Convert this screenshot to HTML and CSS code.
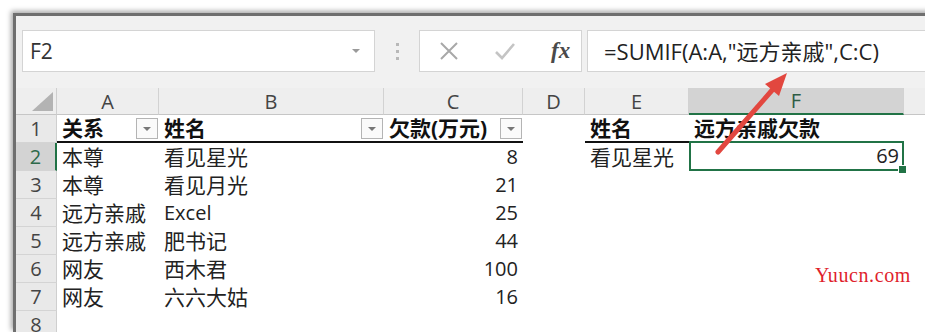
FILE: index.html
```html
<!DOCTYPE html>
<html lang="zh-CN">
<head>
    <meta charset="UTF-8">
    <title>SUMIF</title>
    <link rel="stylesheet" href="styles.css">
</head>
<body>
    <div class="window">
        <div class="toolbar">
            <div class="namebox">
                <span>F2</span>
                <span class="caret"></span>
            </div>
            <div class="dots"><i></i><i></i><i></i></div>
            <div class="fxbtns">
                <svg width="20" height="20" viewBox="0 0 20 20"><path d="M2 2 L18 18 M18 2 L2 18" stroke="#a8a8a8" stroke-width="2" fill="none"/></svg>
                <svg width="22" height="20" viewBox="0 0 22 20"><path d="M2 11 L8 17 L20 3" stroke="#c4c4c4" stroke-width="2.6" fill="none"/></svg>
                <span class="fx">fx</span>
            </div>
            <div class="formula">=SUMIF(A:A,"远方亲戚",C:C)</div>
        </div>

        <div class="sheet">
            <!-- 列标题 -->
            <div class="corner"><span class="tri"></span></div>
            <div class="colhead">A</div>
            <div class="colhead">B</div>
            <div class="colhead">C</div>
            <div class="colhead">D</div>
            <div class="colhead">E</div>
            <div class="colhead sel">F</div>
            <div class="colhead last"></div>

            <!-- 1 -->
            <div class="rowhead">1</div>
            <div class="cell th">关系<span class="filter"></span></div>
            <div class="cell th">姓名<span class="filter"></span></div>
            <div class="cell th">欠款(万元)<span class="filter"></span></div>
            <div class="cell"></div>
            <div class="cell th">姓名</div>
            <div class="cell th2">远方亲戚欠款</div>
            <div class="cell"></div>

            <!-- 2 -->
            <div class="rowhead sel">2</div>
            <div class="cell">本尊</div>
            <div class="cell">看见星光</div>
            <div class="cell num">8</div>
            <div class="cell"></div>
            <div class="cell">看见星光</div>
            <div class="cell num active">69<span class="handle"></span></div>
            <div class="cell"></div>

            <!-- 3 -->
            <div class="rowhead">3</div>
            <div class="cell">本尊</div>
            <div class="cell">看见月光</div>
            <div class="cell num">21</div>
            <div class="cell"></div><div class="cell"></div><div class="cell"></div><div class="cell"></div>

            <!-- 4 -->
            <div class="rowhead">4</div>
            <div class="cell">远方亲戚</div>
            <div class="cell latin">Excel</div>
            <div class="cell num">25</div>
            <div class="cell"></div><div class="cell"></div><div class="cell"></div><div class="cell"></div>

            <!-- 5 -->
            <div class="rowhead">5</div>
            <div class="cell">远方亲戚</div>
            <div class="cell">肥书记</div>
            <div class="cell num">44</div>
            <div class="cell"></div><div class="cell"></div><div class="cell"></div><div class="cell"></div>

            <!-- 6 -->
            <div class="rowhead">6</div>
            <div class="cell">网友</div>
            <div class="cell">西木君</div>
            <div class="cell num">100</div>
            <div class="cell"></div><div class="cell"></div><div class="cell"></div><div class="cell"></div>

            <!-- 7 -->
            <div class="rowhead">7</div>
            <div class="cell">网友</div>
            <div class="cell">六六大姑</div>
            <div class="cell num">16</div>
            <div class="cell"></div><div class="cell"></div><div class="cell"></div><div class="cell"></div>

            <!-- 8 -->
            <div class="rowhead">8</div>
            <div class="cell"></div><div class="cell"></div><div class="cell"></div>
            <div class="cell"></div><div class="cell"></div><div class="cell"></div><div class="cell"></div>
        </div>
    </div>

    <!-- 빨간 화살표 -->
    <svg class="arrow" width="925" height="332" viewBox="0 0 925 332">
        <path d="M718 152 L774 88" stroke="#e2473f" stroke-width="5" stroke-linecap="round" fill="none"/>
        <path d="M787 73 L765 84 L779 96 Z" fill="#e2473f"/>
    </svg>

    <div class="mark">Yuucn.com</div>
</body>
</html>
```

FILE: styles.css
```css
body {
    margin: 0;
    width: 925px;
    height: 332px;
    overflow: hidden;
    background-color: white;
    font-family: "Open Sans", "Noto Sans CJK SC", sans-serif;
    position: relative;
}

div.window {
    margin-left: 13px;
    margin-top: 13px;
    width: 920px;
    height: 316px;
    border-top: 3px solid #6f6f6f;
    border-left: 3px solid #6f6f6f;
    box-shadow: -2px -2px 5px rgba(0, 0, 0, 0.35);
    background-color: white;
    overflow: hidden;
}

/* 수식 입력줄 */
div.toolbar {
    height: 72px;
    background-color: #f1f1f1;
    display: flex;
    align-items: flex-start;
    padding-top: 14px;
    padding-left: 6px;
    box-sizing: border-box;
}

div.namebox {
    width: 353px;
    height: 42px;
    box-sizing: border-box;
    background-color: white;
    border: 1px solid #d4d4d4;
    display: flex;
    align-items: center;
    justify-content: space-between;
    padding: 0 14px 0 7px;
    font-size: 21px;
    color: #333;
}

div.namebox .caret {
    width: 0;
    height: 0;
    border-left: 4px solid transparent;
    border-right: 4px solid transparent;
    border-top: 4px solid #9a9a9a;
}

div.dots {
    width: 44px;
    height: 42px;
    display: flex;
    flex-direction: column;
    align-items: center;
    justify-content: center;
    gap: 4px;
}

div.dots i {
    width: 3px;
    height: 3px;
    background-color: #b8b8b8;
}

div.fxbtns {
    width: 163px;
    height: 42px;
    box-sizing: border-box;
    background-color: white;
    border: 1px solid #d4d4d4;
    display: flex;
    align-items: center;
    padding-left: 19px;
    gap: 35px;
}

div.fxbtns .fx {
    font-family: "Liberation Serif", serif;
    font-style: italic;
    font-weight: bold;
    font-size: 23px;
    color: #4a4a4a;
}

div.formula {
    margin-left: 5px;
    flex: 1;
    height: 42px;
    box-sizing: border-box;
    background-color: white;
    border: 1px solid #d4d4d4;
    border-right: none;
    padding-left: 16px;
    line-height: 40px;
    font-size: 22px;
    color: #222;
    white-space: nowrap;
}

/* 시트 */
div.sheet {
    display: grid;
    grid-template-columns: 41px 102px 225px 139px 62px 104px 215px 1fr;
    grid-template-rows: 27px repeat(8, 28px);
}

div.corner {
    background-color: #eeeeee;
    border-right: 1px solid #cfcfcf;
    border-bottom: 1px solid #c6c6c6;
    position: relative;
}

div.corner .tri {
    position: absolute;
    right: 3px;
    bottom: 3px;
    width: 0;
    height: 0;
    border-left: 21px solid transparent;
    border-bottom: 19px solid #b3b3b3;
}

div.colhead {
    background-color: #eeeeee;
    border-right: 1px solid #d2d2d2;
    border-bottom: 1px solid #c6c6c6;
    text-align: center;
    font-size: 20px;
    line-height: 27px;
    color: #444;
}

div.colhead.sel {
    background-color: #d3d3d3;
    border-bottom: 2px solid #217346;
    color: #2e5c45;
    line-height: 26px;
}

div.colhead.last {
    border-right: none;
}

div.rowhead {
    background-color: #e9e9e9;
    border-right: 1px solid #cfcfcf;
    border-bottom: 1px solid #d4d4d4;
    text-align: center;
    font-size: 20px;
    line-height: 28px;
    color: #444;
}

div.rowhead.sel {
    background-color: #d3d3d3;
    border-right: 2px solid #217346;
    color: #2e6a4a;
}

div.cell {
    font-size: 21px;
    line-height: 28px;
    padding: 0 5px;
    color: #222;
    white-space: nowrap;
    position: relative;
}

div.cell.num,
div.cell.latin {
    font-size: 20px;
}

div.cell.num {
    text-align: right;
}

div.cell.th {
    font-weight: bold;
    color: #111;
    border-bottom: 2px solid #111;
    line-height: 27px;
}

div.cell.th2 {
    font-weight: bold;
    color: #111;
    line-height: 27px;
}

div.cell .filter {
    position: absolute;
    right: 1px;
    top: 3px;
    width: 22px;
    height: 21px;
    box-sizing: border-box;
    border: 1px solid #b4b4b4;
    background-color: #fafafa;
}

div.cell .filter::after {
    content: "";
    position: absolute;
    left: 6px;
    top: 8px;
    border-left: 4px solid transparent;
    border-right: 4px solid transparent;
    border-top: 4px solid #777;
}

div.cell.active {
    border: 2px solid #217346;
    margin-top: -2px;
    line-height: 26px;
    padding-right: 3px;
}

div.cell.active .handle {
    position: absolute;
    right: -5px;
    bottom: -5px;
    width: 7px;
    height: 7px;
    background-color: #217346;
    border: 1px solid white;
}

svg.arrow {
    position: absolute;
    left: 0;
    top: 0;
}

div.mark {
    position: absolute;
    left: 815px;
    top: 264px;
    font-family: "Liberation Serif", serif;
    font-size: 20px;
    color: #e01f2d;
    letter-spacing: 0.6px;
}
```
